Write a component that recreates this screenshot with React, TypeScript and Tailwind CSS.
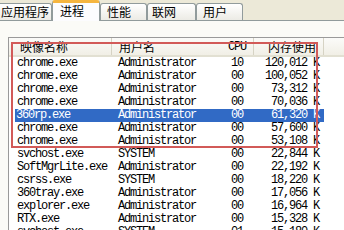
import React from "react";

const MONO = { fontFamily: '"Liberation Mono", "DejaVu Sans Mono", monospace' };

const TABS = [
  { label: "应用程序", w: "w-[58px]", pl: "pl-[6px]" },
  { label: "进程", w: "w-[48px]", pl: "pl-[7px]", active: true },
  { label: "性能", w: "w-[47px]", pl: "pl-[6px]" },
  { label: "联网", w: "w-[49px]", pl: "pl-[4px]" },
  { label: "用户", w: "w-[47px]", pl: "pl-[6px]" },
];

const ROWS = [
  ["chrome.exe", "Administrator", "10", "120,012 K"],
  ["chrome.exe", "Administrator", "00", "100,052 K"],
  ["chrome.exe", "Administrator", "00", "73,312 K"],
  ["chrome.exe", "Administrator", "00", "70,036 K"],
  ["360rp.exe", "Administrator", "00", "61,320 K"],
  ["chrome.exe", "Administrator", "00", "57,600 K"],
  ["chrome.exe", "Administrator", "00", "53,108 K"],
  ["svchost.exe", "SYSTEM", "00", "22,844 K"],
  ["SoftMgrLite.exe", "Administrator", "00", "22,192 K"],
  ["csrss.exe", "SYSTEM", "00", "18,220 K"],
  ["360tray.exe", "Administrator", "00", "17,056 K"],
  ["explorer.exe", "Administrator", "00", "16,964 K"],
  ["RTX.exe", "Administrator", "00", "15,328 K"],
  ["svchost.exe", "SYSTEM", "01", "15,180 K"],
];

const SELECTED = 4;

export default function App() {
  return (
    <div
      className="relative w-[344px] h-[230px] overflow-hidden bg-[#ece9d8] text-black"
      style={{ fontFamily: '"Noto Sans CJK SC", "Noto Sans", sans-serif' }}
    >
      {/* tabs */}
      <div className="flex items-end h-[20px] ml-[-6px]">
        {TABS.map((t) =>
          t.active ? (
            <div
              key={t.label}
              className={`${t.w} ${t.pl} relative z-10 h-[21px] mb-[-1px] bg-[#fcfcfe] border-x border-[#919b9c] border-t-[3px] border-t-[#f5b53f] rounded-t-[3px] text-[12px] leading-[15px]`}
            >
              {t.label}
            </div>
          ) : (
            <div
              key={t.label}
              className={`${t.w} ${t.pl} h-[17px] bg-gradient-to-b from-[#ffffff] to-[#ecebe5] border border-b-0 border-[#919b9c] rounded-t-[3px] text-[12px] leading-[16px]`}
            >
              {t.label}
            </div>
          )
        )}
      </div>

      {/* tab page */}
      <div className="border-t border-[#919b9c] bg-[#fbfbf7] h-[210px] pt-[16px] pl-[8px]">
        <div className="bg-white border-l border-t border-[#9a9a9a] h-full">
          {/* header */}
          <div className="flex h-[19px] bg-gradient-to-b from-[#fbfbf9] to-[#f1efe6] border-b-[2px] border-[#e2e0d2] text-[12px] leading-[17px]">
            <div className="w-[103px] pl-[11px] border-r border-[#d6d3c4]">映像名称</div>
            <div className="w-[110px] pl-[7px]">用户名</div>
            <div className="w-[32px] pl-[6px] pt-[1px] border-r border-[#d6d3c4] text-[12px] tracking-[-1.2px]" style={MONO}>
              CPU
            </div>
            <div className="w-[70px] pr-[7px] text-right border-r border-[#d6d3c4]">内存使用</div>
            <div className="flex-1" />
          </div>

          {/* rows */}
          <div className="text-[12px] tracking-[-1.2px]" style={MONO}>
            {ROWS.map((r, i) => {
              const sel = i === SELECTED;
              return (
                <div key={i} className="flex h-[13px] leading-[13px]">
                  <div className="w-[6px]" />
                  <div className={`flex ${sel ? "bg-[#316ac5] text-white" : ""}`}>
                    <div className={`w-[97px] ${sel ? "pl-[1px]" : "pl-[2px]"} whitespace-nowrap`}>{r[0]}</div>
                    <div className="w-[110px] pl-[6px] whitespace-nowrap">{r[1]}</div>
                    <div className="w-[32px] pl-[9px]">{r[2]}</div>
                    <div className="w-[70px] pr-[5px] text-right whitespace-nowrap">{r[3]}</div>
                  </div>
                </div>
              );
            })}
          </div>
        </div>
      </div>

      {/* red annotation box */}
      <div className="absolute left-[11px] top-[42px] w-[307px] h-[106px] border-2 border-[#d25a58] pointer-events-none" />
    </div>
  );
}
